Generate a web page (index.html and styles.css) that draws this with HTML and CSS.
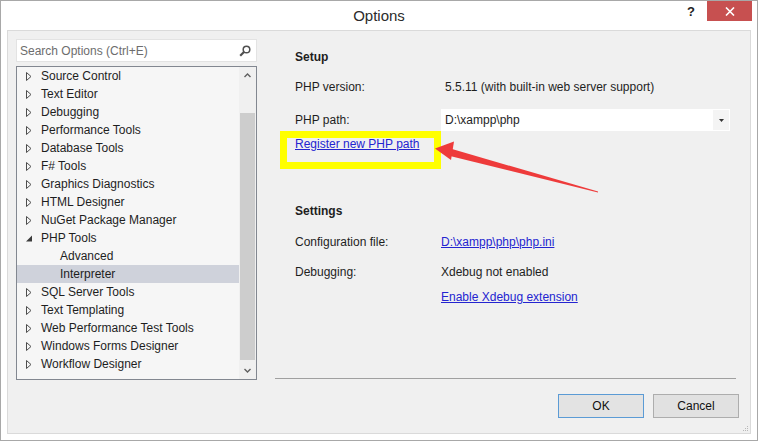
FILE: index.html
```
<!DOCTYPE html>
<html>
	<head lang="en">
		<meta charset="UTF-8">
		<title>Options</title>
		<link rel="stylesheet" href="styles.css">
	</head>
	<body>
		<div class="window">
			<div class="titlebar">
				<div></div>
				<div class="title">Options</div>
				<div class="caption-btns">
					<span class="help">?</span>
					<span class="close">
						<svg width="10" height="9" viewBox="0 0 10 9"><path d="M1 0.5 L9 8.5 M9 0.5 L1 8.5" stroke="#fff" stroke-width="1.6" fill="none"/></svg>
					</span>
				</div>
			</div>

			<div class="client">
				<div class="sidebar">
					<div class="search">
						<span>Search Options (Ctrl+E)</span>
						<svg width="12" height="12" viewBox="0 0 12 12"><circle cx="7.5" cy="4.5" r="3.3" stroke="#505050" stroke-width="1.5" fill="none"/><path d="M5.2 6.8 L1.2 10.8" stroke="#505050" stroke-width="2.2"/></svg>
					</div>
					<div class="tree">
						<ul class="items">
							<li><svg class="tri" width="6" height="9" viewBox="0 0 6 9"><path d="M0.5 0.5 L5 4.5 L0.5 8.5 Z" fill="none" stroke="#4d4d4d"/></svg>Source Control</li>
							<li><svg class="tri" width="6" height="9" viewBox="0 0 6 9"><path d="M0.5 0.5 L5 4.5 L0.5 8.5 Z" fill="none" stroke="#4d4d4d"/></svg>Text Editor</li>
							<li><svg class="tri" width="6" height="9" viewBox="0 0 6 9"><path d="M0.5 0.5 L5 4.5 L0.5 8.5 Z" fill="none" stroke="#4d4d4d"/></svg>Debugging</li>
							<li><svg class="tri" width="6" height="9" viewBox="0 0 6 9"><path d="M0.5 0.5 L5 4.5 L0.5 8.5 Z" fill="none" stroke="#4d4d4d"/></svg>Performance Tools</li>
							<li><svg class="tri" width="6" height="9" viewBox="0 0 6 9"><path d="M0.5 0.5 L5 4.5 L0.5 8.5 Z" fill="none" stroke="#4d4d4d"/></svg>Database Tools</li>
							<li><svg class="tri" width="6" height="9" viewBox="0 0 6 9"><path d="M0.5 0.5 L5 4.5 L0.5 8.5 Z" fill="none" stroke="#4d4d4d"/></svg>F# Tools</li>
							<li><svg class="tri" width="6" height="9" viewBox="0 0 6 9"><path d="M0.5 0.5 L5 4.5 L0.5 8.5 Z" fill="none" stroke="#4d4d4d"/></svg>Graphics Diagnostics</li>
							<li><svg class="tri" width="6" height="9" viewBox="0 0 6 9"><path d="M0.5 0.5 L5 4.5 L0.5 8.5 Z" fill="none" stroke="#4d4d4d"/></svg>HTML Designer</li>
							<li><svg class="tri" width="6" height="9" viewBox="0 0 6 9"><path d="M0.5 0.5 L5 4.5 L0.5 8.5 Z" fill="none" stroke="#4d4d4d"/></svg>NuGet Package Manager</li>
							<li><svg class="tri" width="6" height="9" viewBox="0 0 6 9"><path d="M6 1.5 L6 7.5 L0 7.5 Z" fill="#3c3c3c"/></svg>PHP Tools</li>
							<li class="child">Advanced</li>
							<li class="child selected">Interpreter</li>
							<li><svg class="tri" width="6" height="9" viewBox="0 0 6 9"><path d="M0.5 0.5 L5 4.5 L0.5 8.5 Z" fill="none" stroke="#4d4d4d"/></svg>SQL Server Tools</li>
							<li><svg class="tri" width="6" height="9" viewBox="0 0 6 9"><path d="M0.5 0.5 L5 4.5 L0.5 8.5 Z" fill="none" stroke="#4d4d4d"/></svg>Text Templating</li>
							<li><svg class="tri" width="6" height="9" viewBox="0 0 6 9"><path d="M0.5 0.5 L5 4.5 L0.5 8.5 Z" fill="none" stroke="#4d4d4d"/></svg>Web Performance Test Tools</li>
							<li><svg class="tri" width="6" height="9" viewBox="0 0 6 9"><path d="M0.5 0.5 L5 4.5 L0.5 8.5 Z" fill="none" stroke="#4d4d4d"/></svg>Windows Forms Designer</li>
							<li><svg class="tri" width="6" height="9" viewBox="0 0 6 9"><path d="M0.5 0.5 L5 4.5 L0.5 8.5 Z" fill="none" stroke="#4d4d4d"/></svg>Workflow Designer</li>
						</ul>
						<div class="scrollbar">
							<div class="sb-btn"><svg width="7" height="5" viewBox="0 0 7 5"><path d="M0.5 4 L3.5 1 L6.5 4" stroke="#606060" stroke-width="1.4" fill="none"/></svg></div>
							<div class="sb-track"><div class="sb-thumb"></div></div>
							<div class="sb-btn"><svg width="7" height="5" viewBox="0 0 7 5"><path d="M0.5 1 L3.5 4 L6.5 1" stroke="#606060" stroke-width="1.4" fill="none"/></svg></div>
						</div>
					</div>
				</div>

				<div class="main">
					<div class="content">
						<div class="heading">Setup</div>
						<div class="field f-version">
							<div class="label">PHP version:</div>
							<div class="value pad">5.5.11 (with built-in web server support)</div>
						</div>
						<div class="field f-path">
							<div class="label">PHP path:</div>
							<div class="combo">
								<span>D:\xampp\php</span>
								<span class="combo-btn"><svg width="5" height="3" viewBox="0 0 5 3"><path d="M0 0 L5 0 L2.5 3 Z" fill="#333"/></svg></span>
							</div>
						</div>
						<div class="register"><a href="#">Register new PHP path</a></div>

						<div class="heading h-settings">Settings</div>
						<div class="field f-config">
							<div class="label">Configuration file:</div>
							<div class="value"><a href="#">D:\xampp\php\php.ini</a></div>
						</div>
						<div class="field f-debug">
							<div class="label">Debugging:</div>
							<div class="value">Xdebug not enabled</div>
						</div>
						<div class="field f-enable">
							<div class="label"></div>
							<div class="value"><a href="#">Enable Xdebug extension</a></div>
						</div>
					</div>
					<div class="separator"></div>
					<div class="footer">
						<button class="btn btn-default">OK</button>
						<button class="btn">Cancel</button>
					</div>
				</div>
				<svg class="grip" width="7" height="7" viewBox="0 0 7 7"><g fill="#b8b8b8"><rect x="5" y="1" width="1" height="1"/><rect x="3" y="3" width="1" height="1"/><rect x="5" y="3" width="1" height="1"/><rect x="1" y="5" width="1" height="1"/><rect x="3" y="5" width="1" height="1"/><rect x="5" y="5" width="1" height="1"/></g></svg>
			</div>

			<!-- annotation drawn over the dialog -->
			<div class="mark-box"></div>
			<svg class="mark-arrow" width="180" height="60" viewBox="430 140 180 60">
				<polygon points="598,191.6 452,149 450,156 598,192.4" fill="#ee3b3b"/>
				<polygon points="435,148.5 454,141.5 451,160" fill="#ee3b3b"/>
			</svg>
		</div>
	</body>
</html>
```

FILE: styles.css
```
*{
	padding: 0;
	margin: 0;
	box-sizing: border-box;
}
body{
	background: #fff;
	font-family: "Liberation Sans", Arial, sans-serif;
	font-size: 12px;
	color: #1e1e1e;
}
a{
	color: #2424d0;
	text-decoration: underline;
}
ul{
	list-style: none;
}

.window{
	position: relative;
	width: 758px;
	height: 441px;
	border: 1px solid #a8a8a8;
	background: #fff;
	display: flex;
	flex-direction: column;
}

/* title bar */
.titlebar{
	height: 29px;
	display: grid;
	grid-template-columns: 1fr auto 1fr;
	align-items: start;
}
.titlebar .title{
	font-size: 15px;
	color: #2b2b2b;
	line-height: 30px;
}
.caption-btns{
	display: flex;
	justify-content: flex-end;
	align-items: flex-start;
	margin-right: 5px;
}
.caption-btns .help{
	font-weight: bold;
	font-size: 13px;
	line-height: 14px;
	margin-top: 4px;
	margin-right: 12px;
	color: #222;
}
.caption-btns .close{
	width: 45px;
	height: 20px;
	background: #c75050;
	display: flex;
	align-items: center;
	justify-content: center;
}

/* client area */
.client{
	position: relative;
	flex: 1;
	margin: 0 6px 6px 6px;
	border: 1px solid #dadada;
	background: #f0f0f0;
	display: flex;
}

.sidebar{
	width: 249px;
	padding: 8px 0 0 8px;
}
.search{
	height: 23px;
	background: #fff;
	border: 1px solid #e3e3e3;
	display: flex;
	align-items: center;
	justify-content: space-between;
	padding: 0 5px 0 3px;
	color: #6d6d6d;
}
.tree{
	margin-top: 4px;
	height: 314px;
	border: 1px solid #828790;
	background: #f6f6f6;
	display: flex;
}
.tree .items{
	flex: 1;
}
.tree .items li{
	height: 18px;
	line-height: 18px;
	padding-left: 9px;
	display: flex;
	align-items: center;
	white-space: nowrap;
}
.tree .items li .tri{
	margin-right: 9px;
}
.tree .items li.child{
	padding-left: 43px;
}
.tree .items li.selected{
	background: #cfd2db;
}

.scrollbar{
	width: 17px;
	background: #f0f0f0;
	display: flex;
	flex-direction: column;
}
.sb-btn{
	height: 17px;
	display: flex;
	align-items: center;
	justify-content: center;
}
.sb-track{
	flex: 1;
	padding: 29px 1px 2px 1px;
}
.sb-thumb{
	height: 247px;
	background: #cdcdcd;
}

/* settings panel */
.main{
	flex: 1;
	display: flex;
	flex-direction: column;
}
.content{
	flex: 1;
	padding: 18px 0 0 38px;
}
.heading{
	font-weight: bold;
	line-height: 16px;
}
.field{
	display: flex;
	align-items: center;
	line-height: 16px;
}
.field .label{
	width: 146px;
}
.field .value.pad{
	padding-left: 4px;
}
.f-version{ margin-top: 14px; }
.f-path{ margin-top: 14px; }
.combo{
	width: 289px;
	height: 22px;
	background: #fff;
	display: flex;
	align-items: center;
	justify-content: space-between;
	padding-left: 4px;
}
.combo-btn{
	width: 16px;
	height: 20px;
	margin-right: 1px;
	background: #f4f4f4;
	display: flex;
	align-items: center;
	justify-content: center;
}
.register{
	margin-top: 5px;
	line-height: 16px;
}
.h-settings{ margin-top: 51px; }
.f-config{ margin-top: 15px; }
.f-debug{ margin-top: 14px; }
.f-enable{ margin-top: 9px; }

.separator{
	height: 1px;
	background: #a0a0a0;
	margin: 0 14px 0 18px;
}
.footer{
	display: flex;
	justify-content: flex-end;
	gap: 9px;
	padding: 15px 11px 15px 0;
}
.btn{
	width: 86px;
	height: 24px;
	font-family: "Liberation Sans", Arial, sans-serif;
	font-size: 12px;
	color: #111;
	background: #e1e1e1;
	border: 1px solid #adadad;
}
.btn-default{
	border-color: #5b9bd5;
	background: #e3e3e3;
}

.grip{
	position: absolute;
	right: 1px;
	bottom: 1px;
}

/* annotation overlay */
.mark-box{
	position: absolute;
	left: 279px;
	top: 130px;
	width: 161px;
	height: 38px;
	border: 7px solid #ffff00;
}
.mark-arrow{
	position: absolute;
	left: 429px;
	top: 139px;
}
```
